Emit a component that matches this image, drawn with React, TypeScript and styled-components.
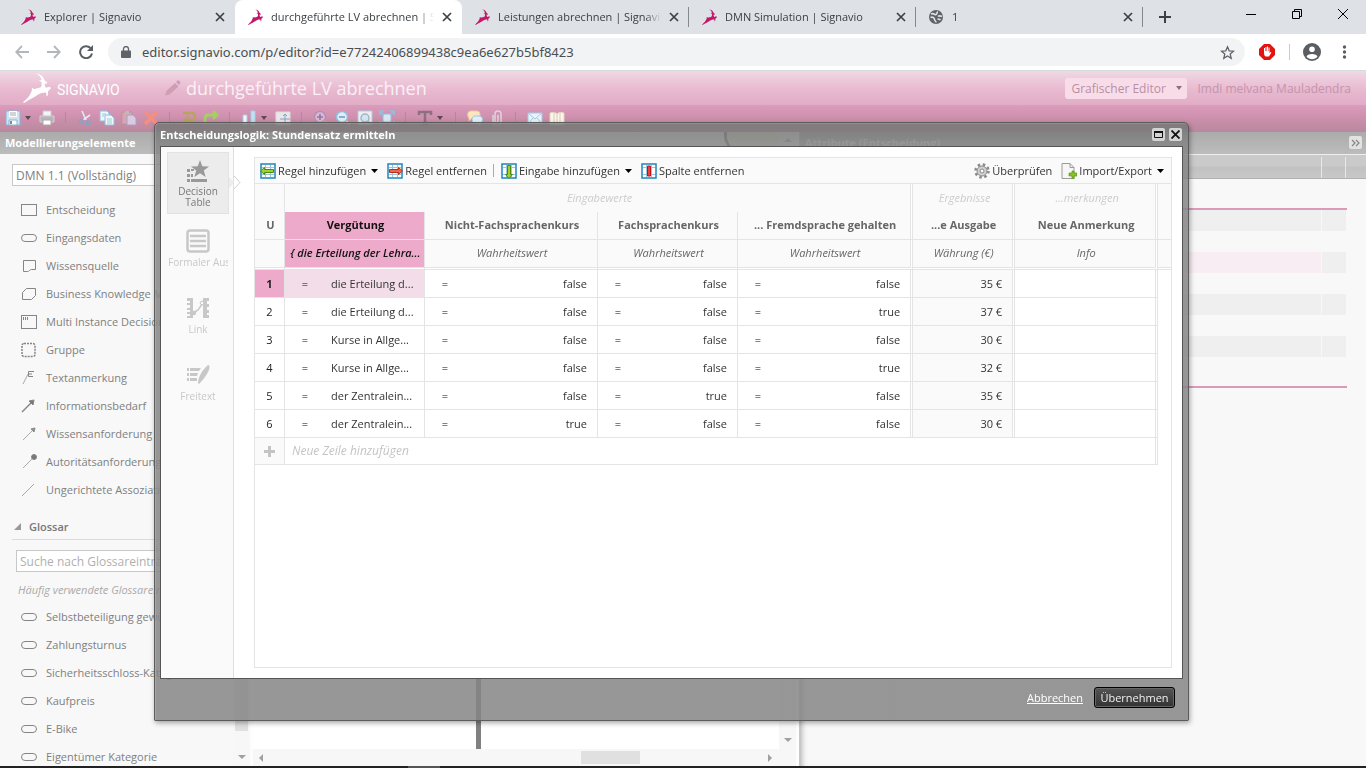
import React from "react";
import styled, { createGlobalStyle, css } from "styled-components";

const LINE = "#e4e4e4";
const PINK = "#eeaacb";

const GlobalStyle = createGlobalStyle`
  * { box-sizing: border-box; }
  body { margin: 0; font-family: "Open Sans", "Noto Sans", sans-serif; font-size: 11px; color: #333; }
  button, input, select { font: inherit; color: inherit; margin: 0; padding: 0; border: 0; background: none; }
  svg { display: block; flex: none; }
`;

const Page = styled.div`
  display: flex;
  flex-direction: column;
  height: 100vh;
  overflow: hidden;
  background: #f8f8f8;
`;

/* ---------- browser chrome ---------- */
const TabStrip = styled.div`
  display: flex;
  flex: none;
  height: 34px;
  padding-left: 8px;
  background: #dee1e6;
`;
const Tab = styled.div<{ $active?: boolean; $divider?: boolean }>`
  position: relative;
  display: flex;
  align-items: center;
  gap: 8px;
  flex: 0 1 227px;
  min-width: 0;
  height: 34px;
  padding: 0 10px 0 13px;
  border-radius: 8px 8px 0 0;
  background: ${(p) => (p.$active ? "#fff" : "transparent")};
  color: #3c4043;
  font-size: 11px;
  ${(p) =>
    p.$divider &&
    css`
      &::after {
        content: "";
        position: absolute;
        right: 0;
        top: 7px;
        height: 20px;
        border-right: 1px solid #85888c;
      }
    `}
`;
const TabTitle = styled.span`
  flex: 1;
  min-width: 0;
  padding-bottom: 2px;
  overflow: hidden;
  white-space: nowrap;
  mask-image: linear-gradient(90deg, #000 calc(100% - 16px), transparent);
`;
const PlainButton = styled.button`
  display: flex;
  align-items: center;
  justify-content: center;
  flex: none;
`;
const NewTab = styled(PlainButton)`
  width: 44px;
`;
const WindowButtons = styled.div`
  display: flex;
  margin-left: auto;
  padding-bottom: 6px;
`;
const WindowButton = styled(PlainButton)`
  width: 46px;
`;
const AddressRow = styled.div`
  display: flex;
  align-items: center;
  flex: none;
  height: 37px;
  padding: 0 11px 0 6px;
  border-bottom: 1px solid #d5dcdd;
  background: #fff;
`;
const NavButton = styled(PlainButton)`
  width: 32px;
  height: 28px;
`;
const Omnibox = styled.div`
  display: flex;
  align-items: center;
  flex: 1;
  height: 28px;
  margin-left: 6px;
  padding: 0 10px 0 13px;
  gap: 11px;
  border-radius: 14px;
  background: #f1f3f4;
  font-family: "Noto Sans", sans-serif;
  font-size: 13px;
`;
const Url = styled.input`
  flex: 1;
  min-width: 0;
  color: #4a4e52;
  outline: 0;
`;
const ExtSeparator = styled.span`
  width: 1px;
  height: 16px;
  background: #c8cbcf;
`;
const Extension = styled(PlainButton)`
  width: 44px;
`;

/* ---------- editor header ---------- */
const Header = styled.header`
  display: flex;
  align-items: center;
  flex: none;
  height: 34px;
  padding: 0 15px 0 23px;
  background: linear-gradient(#f0d9e4, #e8b9d0 55%, #e1adc6);
`;
const Brand = styled.span`
  width: 113px;
  padding: 3px 0 0 6px;
  color: #fff;
  font: 400 14px/20px Roboto, sans-serif;
`;
const DocTitle = styled.h1`
  margin: 0 auto 0 4px;
  color: #fbf0f5;
  font-size: 18px;
  font-weight: 400;
  line-height: 24px;
`;
const ModeButton = styled.button`
  display: flex;
  align-items: center;
  justify-content: space-between;
  width: 122px;
  height: 21px;
  margin-right: 10px;
  padding: 0 5px 0 6px;
  border-radius: 3px;
  background: #f8dde9;
  color: #b98ea4;
  font-size: 12px;
`;
const UserLink = styled.a`
  color: #c394ab;
  font-size: 12px;
  text-decoration: none;
`;
const ToolBar = styled.div`
  display: flex;
  align-items: center;
  flex: none;
  height: 27px;
  padding: 0 0 2px 2px;
  background: linear-gradient(#dc9cbc, #cc8fac 50%, #b8899e);
`;
const ToolButton = styled(PlainButton)`
  width: 22px;
  height: 22px;
`;
const CaretButton = styled(PlainButton)`
  width: 12px;
  height: 22px;
  padding-right: 4px;
`;
const ToolSeparator = styled.span`
  width: 1px;
  height: 11px;
  margin: 0 8px 0 7px;
  background: #b7869d;
`;

/* ---------- work area ---------- */
const WorkArea = styled.main`
  display: flex;
  flex: 1;
  min-height: 0;
`;
const PanelTitle = styled.h2`
  display: flex;
  align-items: center;
  justify-content: space-between;
  flex: none;
  height: 22px;
  margin: 0;
  padding: 0 5px 1px;
  background: linear-gradient(#ababab, #bcbcbc);
  color: #fff;
  font-size: 11px;
  font-weight: 700;
`;
const Sidebar = styled.aside`
  display: flex;
  flex-direction: column;
  flex: none;
  width: 250px;
  overflow: hidden;
  background: #f8f8f8;
  color: #808080;
`;
const SidebarBody = styled.div`
  display: flex;
  flex: 1;
  min-height: 0;
`;
const SidebarContent = styled.div`
  flex: 1;
  min-width: 0;
  overflow: hidden;
  padding: 10px 6px 0 12px;
`;
const StencilSelect = styled.select`
  display: block;
  appearance: none;
  width: 100%;
  height: 22px;
  margin-bottom: 10px;
  padding: 0 3px;
  border: 1px solid #c8c8c8;
  background: #fff;
  font-size: 12px;
`;
const ShapeList = styled.ul`
  margin: 0;
  padding: 0 0 0 8px;
  list-style: none;
`;
const ShapeItem = styled.li`
  display: flex;
  align-items: center;
  gap: 8px;
  height: 28px;
  white-space: nowrap;
`;
const ShapeLabel = styled.span`
  padding-bottom: 2px;
`;
const SectionTitle = styled.h3`
  display: flex;
  align-items: center;
  gap: 8px;
  height: 36px;
  margin: 0 0 10px;
  padding: 10px 0 0 2px;
  border-bottom: 1px solid #dcdcdc;
  color: #777;
  font-size: 11px;
  font-weight: 600;
`;
const SearchBox = styled.input`
  display: block;
  width: 100%;
  height: 22px;
  margin-left: 4px;
  padding: 0 3px;
  border: 1px solid #c8c8c8;
  background: #fff;
  font-size: 12px;
  &::placeholder { color: #b0b0b0; opacity: 1; }
`;
const Hint = styled.p`
  margin: 0;
  padding: 10px 0 5px 6px;
  color: #aaa;
  font-style: italic;
  line-height: 16px;
  white-space: nowrap;
`;
const ScrollTrack = styled.div<{ $row?: boolean }>`
  display: flex;
  flex-direction: ${(p) => (p.$row ? "row" : "column")};
  align-items: center;
  justify-content: space-between;
  flex: none;
  ${(p) => (p.$row ? "height: 17px; padding: 0 22px 0 4px;" : "width: 17px; padding: 4px 0 5px;")}
  background: #f7f7f7;
`;
const SideThumb = styled.span`
  width: 13px;
  flex: 1;
  margin-bottom: 22px;
  background: #e0e0e0;
`;
const CanvasThumb = styled.span`
  width: 59px;
  height: 13px;
  margin: 0 126px 0 auto;
  background: #e0e0e0;
`;
const Canvas = styled.section`
  display: flex;
  flex-direction: column;
  flex: none;
  width: 549px;
  padding: 0 3px;
  background: #fdfdfd;
`;
const CanvasView = styled.div`
  display: flex;
  flex: 1;
  min-height: 0;
`;
const Drawing = styled.div`
  display: flex;
  flex: 1;
  justify-content: space-between;
  min-width: 0;
  padding-left: 223px;
  background: #fff;
`;
const Connector = styled.span`
  width: 5px;
  margin-top: 60px;
  background: #808080;
`;
const ShapeCorner = styled.span`
  width: 55px;
  height: 20px;
  border: solid #707070;
  border-width: 0 0 2px 3px;
  border-radius: 0 0 0 16px;
  background: #f0f0dc;
`;
const Attributes = styled.aside`
  flex: 1;
  min-width: 0;
  border-left: 1px solid #c8c8c8;
  background: #f8f8f8;
  box-shadow: inset 6px 0 6px -5px rgba(0, 0, 0, 0.35);
`;
const CollapseButton = styled(PlainButton)`
  width: 13px;
  height: 13px;
  margin-right: -1px;
  border-radius: 2px;
  background: #e2e2e2;
`;
const AttributeHead = styled.div`
  display: grid;
  grid-template-columns: 1fr 24px 20px;
  height: 25px;
  padding-top: 2px;
  border-top: 1px solid #eee;
  border-bottom: 1px solid #b0b0b0;
  background: linear-gradient(#cacaca 45%, #c2c2c2 55%, #c8c8c8);
`;
const AttributeHeadCell = styled.span`
  border-right: 1px solid #e8e8e8;
  &:last-child { border-right: 0; }
`;
const AttributeRows = styled.div`
  margin: 29px 19px 0 10px;
  padding-bottom: 8px;
  border: solid #db9ab9;
  border-width: 2px 0;
`;
const AttributeRow = styled.div<{ $tone: string }>`
  display: grid;
  grid-template-columns: 1fr 24px;
  gap: 1px;
  height: 21px;
  margin-right: 1px;
  & > span:first-child { background: ${(p) => (p.$tone === "pink" ? "#f8edf3" : p.$tone === "gray" ? "#efefef" : "transparent")}; }
  & > span:last-child { background: ${(p) => (p.$tone === "none" ? "transparent" : "#efefef")}; }
`;
const Taskbar = styled.div`
  flex: none;
  height: 2px;
  background: linear-gradient(90deg, #222 408px, #555 408px, #555 440px, #222 440px);
`;

/* ---------- dialog ---------- */
const Overlay = styled.div`
  position: fixed;
  inset: 0;
  display: flex;
  padding: 122px 177px 47px 154px;
`;
const Dialog = styled.section`
  display: flex;
  flex-direction: column;
  flex: 1;
  min-width: 0;
  padding: 0 5px;
  border: 1px solid #5c5c5c;
  border-radius: 5px 5px 1px 1px;
  background: linear-gradient(rgba(118, 118, 118, 0.86), rgba(133, 133, 133, 0.85) 24px);
  box-shadow: inset 1px 1px 0 rgba(255, 255, 255, 0.15), 1px 2px 5px rgba(0, 0, 0, 0.35);
`;
const DialogHeader = styled.div`
  display: flex;
  align-items: center;
  flex: none;
  gap: 4px;
  height: 23px;
`;
const DialogTitle = styled.h2`
  margin: 0 auto 0 0;
  color: #fff;
  font-size: 11px;
  font-weight: 700;
`;
const WindowTool = styled(PlainButton)`
  width: 13px;
  height: 13px;
  border-radius: 2px;
  background: #d4d4d4;
  &:last-child { margin-right: 1px; }
`;
const DialogBody = styled.div`
  display: flex;
  flex: 1;
  min-height: 0;
  border: 1px solid #555;
  background: #fff;
`;
const ViewNav = styled.nav`
  display: flex;
  flex-direction: column;
  gap: 5px;
  flex: none;
  width: 73px;
  padding: 5px 4px 0 6px;
  border-right: 1px solid #dedede;
  background: #fafafa;
`;
const ViewItem = styled.button<{ $active?: boolean }>`
  position: relative;
  display: flex;
  flex-direction: column;
  align-items: center;
  gap: ${(p) => (p.$active ? "2px" : "4px")};
  height: 62px;
  padding-top: ${(p) => (p.$active ? "7px" : "9px")};
  border: 1px solid ${(p) => (p.$active ? "#e2e2e2" : "transparent")};
  background: ${(p) => (p.$active ? "#ececec" : "transparent")};
  color: ${(p) => (p.$active ? "#777" : "#c8c8c8")};
  font-size: 10px;
  line-height: 11px;
`;
const ViewLabel = styled.span`
  width: 100%;
  text-align: center;
  white-space: pre-line;
`;
const ClippedLabel = styled(ViewLabel)`
  overflow: hidden;
  text-align: left;
  white-space: nowrap;
`;
const ViewPointer = styled.svg`
  position: absolute;
  left: 61px;
  top: 22px;
`;
const Panel = styled.div`
  display: flex;
  flex-direction: column;
  flex: 1;
  min-width: 0;
  margin: 10px 10px 10px 20px;
  border: 1px solid ${LINE};
`;
const RuleBar = styled.div`
  display: flex;
  align-items: center;
  flex: none;
  height: 26px;
  padding: 0 7px 0 5px;
  border-bottom: 1px solid ${LINE};
  background: #fafafa;
  font-size: 11px;
`;
const RuleButton = styled.button<{ $gap?: number }>`
  display: flex;
  align-items: center;
  gap: 2px;
  margin-right: ${(p) => p.$gap ?? 9}px;
  color: #333;
  white-space: nowrap;
`;
const RuleCaret = styled.span`
  padding-left: 3px;
`;
const RuleSeparator = styled.span`
  width: 1px;
  height: 13px;
  margin: 0 7px 0 1px;
  background: #aaa;
`;
const RuleSpacer = styled.span`
  flex: 1;
`;

const RuleTable = styled.table`
  width: 100%;
  table-layout: fixed;
  border-collapse: separate;
  border-spacing: 0;
  font-size: 11px;
  line-height: 16px;
`;
type CellProps = {
  $edge?: "single" | "double" | "none";
  $bottom?: "single" | "double" | "none";
  $tone?: "pink" | "blush" | "shade" | "plain";
};
const edges = { single: `1px solid ${LINE}`, double: `3px double ${LINE}`, none: "0" };
const tones = { pink: PINK, blush: "#f3dde8", shade: "#fafafa", plain: "transparent" };
const cell = css<CellProps>`
  overflow: hidden;
  padding: 0 4px;
  border-right: ${(p) => edges[p.$edge ?? "single"]};
  border-bottom: ${(p) => edges[p.$bottom ?? "single"]};
  background: ${(p) => tones[p.$tone ?? "plain"]};
  background-clip: padding-box;
  white-space: nowrap;
`;
const HeadCell = styled.th<CellProps & { $kind: "group" | "name" | "type" }>`
  ${cell}
  height: ${(p) => (p.$kind === "type" ? 30 : 28)}px;
  padding: ${(p) => (p.$kind === "group" ? "0 2px 0 6px" : "0 2px 2px 4px")};
  text-align: center;
  color: ${(p) => (p.$kind === "group" ? "#ccc" : p.$tone === "pink" ? "#111" : "#666")};
  font-style: ${(p) => (p.$kind === "name" ? "normal" : "italic")};
  font-weight: ${(p) => (p.$kind === "name" ? 700 : p.$kind === "type" && p.$tone === "pink" ? 600 : 400)};
`;
const RowNumber = styled.th<CellProps>`
  ${cell}
  height: 28px;
  font-weight: ${(p) => (p.$tone === "pink" ? 700 : 400)};
  color: #222;
`;
const OperatorCell = styled.td<CellProps>`
  ${cell}
  text-align: center;
  color: #000;
`;
const ValueCell = styled.td<CellProps & { $align?: string }>`
  ${cell}
  padding: 0 10px 0 6px;
  text-align: ${(p) => p.$align ?? "right"};
  color: #333;
`;
const AddCell = styled.td<CellProps>`
  ${cell}
  height: 27px;
  padding: 0 7px;
  color: #c4c4c4;
  font-size: 12px;
  font-style: italic;
`;
const AddButton = styled(PlainButton)`
  width: 15px;
`;
const DialogFooter = styled.div`
  display: flex;
  align-items: center;
  justify-content: flex-end;
  flex: none;
  gap: 11px;
  height: 41px;
  padding: 0 8px 5px 0;
`;
const CancelLink = styled.a`
  color: #fff;
  text-decoration: underline;
`;
const ApplyButton = styled.button`
  width: 81px;
  height: 21px;
  border: 1px solid #000;
  border-radius: 3px;
  background: linear-gradient(#555, #333);
  box-shadow: inset 0 0 0 1px #666;
  color: #f0f0f0;
`;

/* ---------- drawings ---------- */
const Deer = ({ w, h, color }: { w: number; h: number; color: string }) => (
  <svg width={w} height={h} viewBox="0 0 28 30" fill={color} aria-hidden="true">
    <path d="M13 0c4.500 1.200 8 4 8.500 7.200l2.700 2.300-.5 1.200-2.200-.2c.2 1.600.5 3 1.300 4.300l4-1 1.200 1.500-3 3.200c.3 1.500 0 3-.7 4.500l-1 .2c.3-1.600.2-2.700-.5-3.700c-3 .2-5.600.6-8 2.300C11 24.500 6.500 26.500 1 30l-1-.7C4.500 25.500 7 22.500 8.500 18.500c.3-1 .6-1.700.2-2.800l.8-.9.900 1.300c2.600-.6 5.600-.9 7.600-2.100c.8-1.500.9-3.300.5-5L15.500 7.500c1.200 0 2.300-.1 3-.6C18 4.200 16 2 13 0z" />
  </svg>
);
const Close = () => (
  <svg width="10" height="10" viewBox="0 0 10 10" stroke="#3c4043" strokeWidth="1.700"><path d="M1 1l8 8M9 1l-8 8" /></svg>
);
const Caret = ({ color = "#5d4751", w = 7 }: { color?: string; w?: number }) => (
  <svg width={w} height="4" viewBox="0 0 8 4" preserveAspectRatio="none" fill={color}><path d="M0 0h8L4 4z" /></svg>
);
const Arrow = ({ dir }: { dir: "up" | "down" | "left" | "right" }) => {
  const d = { up: "M0 6L4 2l4 4z", down: "M0 2h8L4 6z", left: "M6 0v8L2 4z", right: "M2 0v8l4-4z" }[dir];
  return <svg width="8" height="8" viewBox="0 0 8 8" fill="#a0a0a0"><path d={d} /></svg>;
};
const Icon = ({ children, size = 16, stroke }: { children: React.ReactNode; size?: number; stroke?: string }) => (
  <svg width={size} height={size} viewBox="0 0 16 16" fill="none" stroke={stroke}>{children}</svg>
);

const toolIcons: Record<string, React.ReactNode> = {
  save: <><path d="M1 1h14v14H1z" fill="#cfe3f0" stroke="#86b4d2" /><path d="M4 1h8v6H4z" fill="#fff" /><path d="M5 3h6M5 5h6" stroke="#a6a6b0" /><path d="M4 10h8v5H4z" fill="#fff" stroke="#86b4d2" /><path d="M6 11v3" stroke="#889" strokeWidth="2" /></>,
  print: <><path d="M4 1h8v5H4z" fill="#f5f5f5" stroke="#ccc" /><path d="M1 6h14v6H1z" fill="#b9b4bb" stroke="#d5d0d6" /><path d="M4 10h8v5H4z" fill="#fff" stroke="#aaa" /></>,
  cut: <><path d="M5 1l4 9M13 5L6 10" stroke="#e3eaf2" strokeWidth="1.600" /><circle cx="4.500" cy="11.500" r="2" stroke="#7fa6cb" strokeWidth="1.500" /><circle cx="11" cy="13" r="2" stroke="#7fa6cb" strokeWidth="1.500" /></>,
  copy: <><path d="M1 1h7l2 2v8H1z" fill="#f1f7fb" stroke="#8fbfe0" /><path d="M6 5h6l3 3v7H6z" fill="#f1f7fb" stroke="#8fbfe0" /><path d="M8 9h5M8 11h5M8 13h5M3 4h4M3 6h2" stroke="#9cc" /></>,
  paste: <><path d="M1 2h10v12H1z" fill="#d5a7b0" stroke="#c0929a" /><path d="M4 1h4v3H4z" fill="#bbb" /><path d="M6 5h6l3 3v7H6z" fill="#dccbe0" stroke="#a9a0cf" /></>,
  remove: <path d="M2 2l12 12M14 2L2 14" stroke="#f58f7c" strokeWidth="3.500" />,
  undo: <path d="M2 3h9c4 0 4 7 0 7H4M8 6l-4 4 4 4" stroke="#b8a35f" strokeWidth="2.500" />,
  redo: <path d="M2 14V9c0-3 2-4 4-4h7M10 1l4 4-4 4" stroke="#a4d060" strokeWidth="2.800" />,
  align: <><path d="M2 5h4v10H2z" fill="#f1f7fb" stroke="#a8cfe8" /><path d="M10 1h4v14h-4z" fill="#c3dff0" stroke="#a8cfe8" /></>,
  move: <><path d="M1 2h14v13H1z" fill="#ece6ea" stroke="#ddd" /><path d="M10 4v10M5 9h10M8 6l2-2 2 2M8 12l2 2 2-2" stroke="#7fa6c5" /></>,
  zoomIn: <><circle cx="7" cy="7" r="5.500" fill="#dcb9d2" stroke="#b58fb5" strokeWidth="1.500" /><path d="M4 7h6M7 4v6" stroke="#8f74a5" strokeWidth="1.500" /><path d="M11 11l4 4" stroke="#d0a888" strokeWidth="2.500" /></>,
  zoomOut: <><circle cx="7" cy="7" r="5.500" fill="#dfeef7" stroke="#8fbfdf" strokeWidth="1.500" /><path d="M4 7h6" stroke="#6f9ab8" strokeWidth="1.500" /><path d="M11 11l4 4" stroke="#e8c29a" strokeWidth="2.500" /></>,
  fit: <><path d="M1 1h14v14H1z" fill="#f0ecf0" stroke="#a8cfe0" /><circle cx="8" cy="8" r="4" fill="#d5e5f0" stroke="#9bb8cd" strokeWidth="1.500" /><path d="M11 11l3 3" stroke="#d8b492" strokeWidth="2" /></>,
  expand: <><path d="M4 4h8v8H4z" fill="#d7e8f3" stroke="#8fc1e0" /><path d="M1 5V1h4M1 1l4 4M11 1h4v4M15 1l-4 4M1 11v4h4M1 15l4-4M15 11v4h-4M15 15l-4-4" stroke="#8fc1e0" strokeWidth="1.500" /></>,
  text: <path d="M2 5V2h12v3M8 2v12M5 14h6" stroke="#8f7081" strokeWidth="2.500" />,
  chat: <><path d="M4 1h6a3 3 0 013 3v1a3 3 0 01-3 3H5l-3 3V8C0 6 0 1 4 1z" fill="#fae7bd" stroke="#eacb94" /><path d="M8 6h4c5 0 4 7 1 7v3l-3-3H8C4 13 4 6 8 6z" fill="#e2eff8" stroke="#9cc6e4" /></>,
  clip: <path d="M4 5v7a4 4 0 008 0V4a3 3 0 00-6 0v7a1.500 1.500 0 003 0V5" stroke="#e1d3db" strokeWidth="1.500" />,
  mail: <><path d="M1 3h14v11H1z" fill="#e9f3fa" stroke="#a0cbe6" /><path d="M1 3l7 6 7-6M1 14l5-6M15 14l-5-6" stroke="#a0cbe6" /></>,
  book: <><path d="M1 3c3-1 5-1 7 1 2-2 4-2 7-1v12H1z" fill="#fdf6ea" stroke="#e3d4c2" /><path d="M8 4v10M5 3v11M11 3v11" stroke="#d9c8b6" /></>,
};
const toolGroups: string[][] = [
  ["save", "^", "print"],
  ["cut", "copy", "paste", "remove"],
  ["undo", "redo"],
  ["align", "^", "move"],
  ["zoomIn", "zoomOut", "fit", "expand"],
  ["text", "^"],
  ["chat", "clip"],
  ["mail", "book"],
];

const shapeIcons: Record<string, React.ReactNode> = {
  rect: <rect x="1.500" y="2.500" width="15" height="11" />,
  pill: <rect x="1.500" y="4.500" width="15" height="7" rx="3.500" />,
  doc: <path d="M3.500 2.500h12v9h-4c-2 0-2 2-4 2h-4z" />,
  cut: <path d="M6.500 2.500h9v7l-4 4h-9v-7z" />,
  multi: <><rect x="1.500" y="1.500" width="15" height="13" /><path d="M3.500 3v3M5.500 3v3M7.500 3v3" /></>,
  group: <rect x="2" y="1.500" width="13" height="13" rx="2" strokeDasharray="2 1" strokeWidth="1.500" />,
  note: <><path d="M3 14L8 4" stroke="#aaa" /><path d="M14 1.500H8.500v5H13M8 4h4" /></>,
  arrowBold: <><path d="M2 14L12 4" strokeWidth="1.500" /><path d="M14 2l-5 1 4 4z" fill="#777" /></>,
  arrow: <><path d="M3 14L13 4" stroke="#aaa" /><path d="M15 2l-4 1 3 3z" fill="#999" /></>,
  dot: <><path d="M3 14L13 4" stroke="#aaa" /><circle cx="14" cy="3" r="2.500" fill="#777" /></>,
  line: <path d="M2 14L14 2" stroke="#aaa" />,
};
const ShapeIcon = ({ name }: { name: string }) => (
  <svg width="18" height="16" viewBox="0 0 18 16" fill="none" stroke="#858585">{shapeIcons[name]}</svg>
);

const shapes: [string, string][] = [
  ["rect", "Entscheidung"],
  ["pill", "Eingangsdaten"],
  ["doc", "Wissensquelle"],
  ["cut", "Business Knowledge Model"],
  ["multi", "Multi Instance Decision"],
  ["group", "Gruppe"],
  ["note", "Textanmerkung"],
  ["arrowBold", "Informationsbedarf"],
  ["arrow", "Wissensanforderung"],
  ["dot", "Autoritätsanforderung"],
  ["line", "Ungerichtete Assoziation"],
];
const glossary = ["Selbstbeteiligung gewünscht", "Zahlungsturnus", "Sicherheitsschloss-Kategorie", "Kaufpreis", "E-Bike", "Eigentümer Kategorie"];

const GridBase = () => (
  <><path d="M1 1h14v14H1z" fill="#fff" stroke="#1c86bf" strokeWidth="1.500" /><path d="M2 4.500h12M2 11.500h12M5.500 2v12M10.500 2v12" stroke="#9cc4dc" /></>
);
const AddRuleIcon = () => <Icon><GridBase /><path d="M.5 8l4-3.500V6.500h9v3h-9v2z" fill="#9fd22a" stroke="#4d8a10" /></Icon>;
const RemoveRuleIcon = () => <Icon><GridBase /><path d="M15.500 8l-4-3.500V6.500h-9v3h9v2z" fill="#f0644c" stroke="#b92c1c" /></Icon>;
const AddInputIcon = () => <Icon><GridBase /><path d="M8 15.500l3.500-4h-2v-9h-3v9h-2z" fill="#9fd22a" stroke="#4d8a10" /></Icon>;
const RemoveColumnIcon = () => <Icon><GridBase /><path d="M6.500 3h3v10h-3z" fill="#f0403a" stroke="#b9141c" /></Icon>;
const GearIcon = () => (
  <Icon>
    <circle cx="8" cy="8" r="6.500" stroke="#8a8a8a" strokeWidth="2.500" strokeDasharray="2.500 2.600" />
    <circle cx="8" cy="8" r="5" fill="#d0d0d0" stroke="#8a8a8a" /><circle cx="8" cy="8" r="2" fill="#fafafa" stroke="#8a8a8a" />
  </Icon>
);
const ExportIcon = () => (
  <Icon><path d="M1 .5h8l4 4v11H1z" fill="#f6f6f6" stroke="#9a9a9a" /><path d="M9 .5v4h4" stroke="#9a9a9a" /><path d="M11 8h2v2h3v3h-3v3h-2v-3H8v-3h3z" fill="#86c61c" stroke="#4d8a10" strokeWidth=".6" /></Icon>
);

const DecisionTableIcon = () => (
  <svg width="24" height="24" viewBox="0 0 24 24" fill="#999"><path d="M14 0l2.300 6.300 6.700.2-5.200 4.100 1.800 6.400L14 13.300 8.400 17l1.800-6.400L5 6.500l6.700-.2z" /><path d="M1 9h3v3H1zM1 14h3v3H1zM5 9h3v2H5zM5 14h2v3H5zM1 19h3v3H1zM5 19h16v3H5z" /></svg>
);
const ExpressionIcon = () => (
  <svg width="24" height="24" viewBox="0 0 24 24" fill="none" stroke="#c8c8c8"><rect x="1.500" y="1.500" width="21" height="21" rx="2.500" strokeWidth="2.500" /><path d="M4 7h16M4 12h16M4 17h16" strokeWidth="2.600" /></svg>
);
const LinkIcon = () => (
  <svg width="24" height="24" viewBox="0 0 24 24" fill="#c8c8c8" stroke="#c8c8c8"><path d="M1 2h6v20H1v-2h3v-2H1v-2h3v-2H1v-2h3V9H1V7h3V5H1zM17 2h6v3h-2v3h2v3h-2v3h2v3h-2v2h2v3h-6z" stroke="none" /><path d="M7 17l5-3 5-7" fill="none" strokeWidth="1.500" /><circle cx="8" cy="17" r="1.800" /><circle cx="16" cy="7" r="1.800" fill="#fafafa" /></svg>
);
const FreeTextIcon = () => (
  <svg width="24" height="24" viewBox="0 0 24 24" fill="#c8c8c8"><path d="M1 5h2v3H1zM4 5h11l-2 3H4zM1 10h2v3H1zM4 10h8l-1 3H4zM1 15h2v3H1zM4 15h7v3H4zM22 2c2 0 2 3 0 7-2 4-5 8-9 12l-1-1c0-6 5-14 10-18z" /></svg>
);

const rules = [
  ["die Erteilung d...", "false", "false", "false", "35 €"],
  ["die Erteilung d...", "false", "false", "true", "37 €"],
  ["Kurse in Allge...", "false", "false", "false", "30 €"],
  ["Kurse in Allge...", "false", "false", "true", "32 €"],
  ["der Zentralein...", "false", "true", "false", "35 €"],
  ["der Zentralein...", "true", "false", "false", "30 €"],
];
const inputs: { name: string; type: string; last?: boolean; pink?: boolean }[] = [
  { name: "Vergütung", type: "{ die Erteilung der Lehra...", pink: true },
  { name: "Nicht-Fachsprachenkurs", type: "Wahrheitswert" },
  { name: "Fachsprachenkurs", type: "Wahrheitswert" },
  { name: "... Fremdsprache gehalten", type: "Wahrheitswert", last: true },
];
const columnWidths = [30, 40, 100, 40, 133, 40, 100, 40, 135, 102, 143];
const attributeTones = ["gray", "none", "pink", "none", "gray", "none", "gray", "none"];

function BrowserChrome() {
  const tabs = ["Explorer | Signavio", "durchgeführte LV abrechnen | Signavio", "Leistungen abrechnen | Signavio", "DMN Simulation | Signavio"];
  return (
    <>
      <TabStrip>
        {tabs.map((t, i) => (
          <Tab key={t} $active={i === 1} $divider={i > 1}>
            <Deer w={15} h={16} color="#c2186b" />
            <TabTitle>{t}</TabTitle>
            <PlainButton aria-label="Tab schließen"><Close /></PlainButton>
          </Tab>
        ))}
        <Tab $divider>
          <svg width="15" height="14" viewBox="0 0 15 14"><circle cx="7" cy="7" r="7" fill="#5f6368" /><path d="M2 4c2-1 3 0 4 .5S9 3 8 1.500M1.500 7.500c2-1 4 .5 4 2s1.500 1 1.500 3M9 6.500c1-1 3-.5 4 0M8.500 9c1 0 2 0 3 1" stroke="#dee1e6" strokeWidth="1.600" fill="none" /></svg>
          <TabTitle>1</TabTitle>
          <PlainButton aria-label="Tab schließen"><Close /></PlainButton>
        </Tab>
        <NewTab aria-label="Neuer Tab"><svg width="12" height="12" viewBox="0 0 12 12" stroke="#3c4043" strokeWidth="2"><path d="M6 0v12M0 6h12" /></svg></NewTab>
        <WindowButtons>
          <WindowButton aria-label="Minimieren"><svg width="10" height="10" viewBox="0 0 10 10" stroke="#000"><path d="M0 5.500h10" /></svg></WindowButton>
          <WindowButton aria-label="Verkleinern"><svg width="10" height="10" viewBox="0 0 10 10" stroke="#000" fill="none"><path d="M.5 2.500h7v7h-7zM2.500 2V.5h7v7H8" /></svg></WindowButton>
          <WindowButton aria-label="Schließen"><svg width="10" height="10" viewBox="0 0 10 10" stroke="#000"><path d="M0 0l10 10M10 0L0 10" /></svg></WindowButton>
        </WindowButtons>
      </TabStrip>
      <AddressRow>
        <NavButton aria-label="Zurück"><svg width="14" height="14" viewBox="0 0 14 14" stroke="#b4b7ba" strokeWidth="1.800" fill="none"><path d="M14 7H1.500M7 1L1.200 7 7 13" /></svg></NavButton>
        <NavButton aria-label="Vor"><svg width="14" height="14" viewBox="0 0 14 14" stroke="#b4b7ba" strokeWidth="1.800" fill="none"><path d="M0 7h12.500M7 1l5.800 6L7 13" /></svg></NavButton>
        <NavButton aria-label="Neu laden"><svg width="14" height="14" viewBox="0 0 14 14"><path d="M11.500 3A6 6 0 1013 8.500" stroke="#5a5d61" strokeWidth="2" fill="none" /><path d="M14 0v6H8z" fill="#5a5d61" /></svg></NavButton>
        <Omnibox>
          <svg width="10" height="12" viewBox="0 0 10 12"><path d="M1 4.500h8a1 1 0 011 1V11a1 1 0 01-1 1H1a1 1 0 01-1-1V5.500a1 1 0 011-1z" fill="#5f6368" /><path d="M2.500 5V3a2.500 2.500 0 015 0v2" stroke="#5f6368" strokeWidth="1.300" fill="none" /></svg>
          <Url aria-label="Adresse" defaultValue="editor.signavio.com/p/editor?id=e77242406899438c9ea6e627b5bf8423" />
          <PlainButton aria-label="Lesezeichen"><svg width="15" height="15" viewBox="0 0 15 15" fill="none" stroke="#5f6368" strokeWidth="1.300"><path d="M7.500 1.800l1.700 4 4.300.4-3.300 2.800 1 4.300-3.700-2.300-3.700 2.300 1-4.300L1.500 6.200l4.300-.4z" /></svg></PlainButton>
        </Omnibox>
        <Extension aria-label="Werbeblocker"><svg width="16" height="16" viewBox="0 0 16 16"><path d="M5 0h6l5 5v6l-5 5H5l-5-5V5z" fill="#e3130f" /><path d="M5 8V4h1v3h.5V3h1v4H8V2.500h1V7h.5V3.500h1V9l1.300-1 .6.500L10 12.500H7C5.500 12.500 5 10.500 5 8z" fill="#fff" /></svg></Extension>
        <ExtSeparator />
        <Extension aria-label="Profil"><svg width="18" height="18" viewBox="0 0 18 18"><circle cx="9" cy="9" r="9" fill="#5a5d61" /><circle cx="9" cy="6.300" r="2.800" fill="#fff" /><path d="M3.500 13.500C4 10 14 10 14.500 13.500 12 17 6 17 3.500 13.500z" fill="#fff" /></svg></Extension>
        <PlainButton aria-label="Menü"><svg width="21" height="16" viewBox="0 0 21 16" fill="#5a5d61"><circle cx="10.500" cy="3" r="1.700" /><circle cx="10.500" cy="8" r="1.700" /><circle cx="10.500" cy="13" r="1.700" /></svg></PlainButton>
      </AddressRow>
    </>
  );
}

function EditorHeader() {
  return (
    <>
      <Header>
        <Deer w={28} h={30} color="#fff" />
        <Brand>SIGNAVIO</Brand>
        <svg width="18" height="16" viewBox="0 0 18 16" fill="#cf9db5"><path d="M1 15.500l1.500-4.500 8.500-8 3.500 3.500-9 8zM12 2l1.500-1.500c1.200-.8 3.500 1.500 2.800 2.800L15 5z" /></svg>
        <DocTitle>durchgeführte LV abrechnen</DocTitle>
        <ModeButton aria-haspopup="menu">Grafischer Editor<Caret color="#8d6e7d" w={6} /></ModeButton>
        <UserLink href="#user">Imdi melvana Mauladendra</UserLink>
      </Header>
      <ToolBar>
        {toolGroups.map((group, g) => (
          <React.Fragment key={g}>
            {g > 0 && <ToolSeparator />}
            {group.map((name, i) =>
              name === "^" ? (
                <CaretButton key={i} aria-label="Weitere Optionen"><Caret w={6} /></CaretButton>
              ) : (
                <ToolButton key={i} aria-label={name}><Icon>{toolIcons[name]}</Icon></ToolButton>
              )
            )}
          </React.Fragment>
        ))}
      </ToolBar>
    </>
  );
}

function Workspace() {
  return (
    <WorkArea>
      <Sidebar>
        <PanelTitle>Modellierungselemente</PanelTitle>
        <SidebarBody>
          <SidebarContent>
            <StencilSelect aria-label="Notation" defaultValue="dmn"><option value="dmn">DMN 1.1 (Vollständig)</option></StencilSelect>
            <ShapeList>
              {shapes.map(([icon, label]) => <ShapeItem key={label}><ShapeIcon name={icon} /><ShapeLabel>{label}</ShapeLabel></ShapeItem>)}
            </ShapeList>
            <SectionTitle><svg width="7" height="7" viewBox="0 0 7 7" fill="#999"><path d="M7 0v7H0z" /></svg>Glossar</SectionTitle>
            <SearchBox aria-label="Glossar durchsuchen" placeholder="Suche nach Glossareinträgen" />
            <Hint>Häufig verwendete Glossareinträge</Hint>
            <ShapeList>
              {glossary.map((label) => <ShapeItem key={label}><ShapeIcon name="pill" /><ShapeLabel>{label}</ShapeLabel></ShapeItem>)}
            </ShapeList>
          </SidebarContent>
          <ScrollTrack><SideThumb /><Arrow dir="down" /></ScrollTrack>
        </SidebarBody>
      </Sidebar>
      <Canvas>
        <CanvasView>
          <Drawing><Connector /><ShapeCorner /></Drawing>
          <ScrollTrack><Arrow dir="up" /><Arrow dir="down" /></ScrollTrack>
        </CanvasView>
        <ScrollTrack $row><Arrow dir="left" /><CanvasThumb /><Arrow dir="right" /></ScrollTrack>
      </Canvas>
      <Attributes>
        <PanelTitle>
          Attribute (Entscheidung)
          <CollapseButton aria-label="Einklappen"><svg width="9" height="8" viewBox="0 0 9 8" fill="none" stroke="#888" strokeWidth="1.300"><path d="M1 1l3 3-3 3M5 1l3 3-3 3" /></svg></CollapseButton>
        </PanelTitle>
        <AttributeHead><AttributeHeadCell /><AttributeHeadCell /><AttributeHeadCell /></AttributeHead>
        <AttributeRows>
          {attributeTones.map((tone, i) => <AttributeRow key={i} $tone={tone}><span /><span /></AttributeRow>)}
        </AttributeRows>
      </Attributes>
    </WorkArea>
  );
}

function DecisionTable() {
  return (
    <RuleTable>
      <colgroup>
        {columnWidths.map((w, i) => <col key={i} width={w} />)}
        <col />
      </colgroup>
      <thead>
        <tr>
          <HeadCell $kind="group" $tone="shade" $bottom="none" />
          <HeadCell $kind="group" $tone="shade" $bottom="none" $edge="double" colSpan={8}>Eingabewerte</HeadCell>
          <HeadCell $kind="group" $tone="shade" $bottom="none" $edge="double">Ergebnisse</HeadCell>
          <HeadCell $kind="group" $tone="shade" $bottom="none" $edge="double">...merkungen</HeadCell>
          <HeadCell $kind="group" $tone="shade" $bottom="none" $edge="none" />
        </tr>
        <tr>
          <HeadCell $kind="name" $tone="shade">U</HeadCell>
          {inputs.map((c) => (
            <HeadCell key={c.name} $kind="name" colSpan={2} $tone={c.pink ? "pink" : "shade"} $edge={c.last ? "double" : "single"}>{c.name}</HeadCell>
          ))}
          <HeadCell $kind="name" $tone="shade" $edge="double">...e Ausgabe</HeadCell>
          <HeadCell $kind="name" $tone="shade" $edge="double">Neue Anmerkung</HeadCell>
          <HeadCell $kind="name" $tone="shade" $edge="none" />
        </tr>
        <tr>
          <HeadCell $kind="type" $tone="shade" $bottom="double" />
          {inputs.map((c) => (
            <HeadCell key={c.name} $kind="type" $bottom="double" colSpan={2} $tone={c.pink ? "pink" : "shade"} $edge={c.last ? "double" : "single"}>{c.type}</HeadCell>
          ))}
          <HeadCell $kind="type" $tone="shade" $bottom="double" $edge="double">Währung (€)</HeadCell>
          <HeadCell $kind="type" $tone="shade" $bottom="double" $edge="double">Info</HeadCell>
          <HeadCell $kind="type" $tone="shade" $bottom="double" $edge="none" />
        </tr>
      </thead>
      <tbody>
        {rules.map((rule, r) => (
          <tr key={r}>
            <RowNumber scope="row" $tone={r === 0 ? "pink" : "plain"}>{r + 1}</RowNumber>
            {inputs.map((c, i) => {
              const tone = r === 0 && i === 0 ? "blush" : "plain";
              return (
                <React.Fragment key={c.name}>
                  <OperatorCell $edge="none" $tone={tone}>=</OperatorCell>
                  <ValueCell $tone={tone} $align={i === 0 ? "left" : "right"} $edge={c.last ? "double" : "single"}>{rule[i]}</ValueCell>
                </React.Fragment>
              );
            })}
            <ValueCell $tone="shade" $edge="double">{rule[4]}</ValueCell>
            <ValueCell $edge="double" />
            <ValueCell $edge="none" $bottom="none" />
          </tr>
        ))}
        <tr>
          <AddCell $tone="shade"><AddButton aria-label="Zeile hinzufügen"><svg width="11" height="11" viewBox="0 0 11 11" stroke="#c4c4c4" strokeWidth="3"><path d="M5.500 0v11M0 5.500h11" /></svg></AddButton></AddCell>
          <AddCell colSpan={10} $edge="double">Neue Zeile hinzufügen</AddCell>
          <AddCell $edge="none" $bottom="none" />
        </tr>
      </tbody>
    </RuleTable>
  );
}

export default function App() {
  return (
    <>
      <GlobalStyle />
      <Page>
        <BrowserChrome />
        <EditorHeader />
        <Workspace />
        <Taskbar />
      </Page>
      <Overlay>
        <Dialog role="dialog" aria-labelledby="dialog-title">
          <DialogHeader>
            <DialogTitle id="dialog-title">Entscheidungslogik: Stundensatz ermitteln</DialogTitle>
            <WindowTool aria-label="Maximieren"><svg width="9" height="7" viewBox="0 0 9 7"><path d="M.5 1h8v5.500h-8z" fill="none" stroke="#111" /><path d="M0 0h9v2H0z" fill="#111" /></svg></WindowTool>
            <WindowTool aria-label="Schließen"><svg width="9" height="9" viewBox="0 0 9 9" stroke="#111" strokeWidth="1.800"><path d="M.5 .5l8 8M8.500 .5l-8 8" /></svg></WindowTool>
          </DialogHeader>
          <DialogBody>
            <ViewNav>
              <ViewItem $active>
                <DecisionTableIcon />
                <ViewLabel>{"Decision\nTable"}</ViewLabel>
                <ViewPointer width="12" height="15" viewBox="0 0 12 15"><path d="M0 2l5 5.500L0 13z" fill="#ececec" /><path d="M5 1l6 6.500L5 14" fill="#fff" stroke="#d0d0d0" /></ViewPointer>
              </ViewItem>
              <ViewItem><ExpressionIcon /><ClippedLabel>Formaler Ausdruck</ClippedLabel></ViewItem>
              <ViewItem><LinkIcon /><ViewLabel>Link</ViewLabel></ViewItem>
              <ViewItem><FreeTextIcon /><ViewLabel>Freitext</ViewLabel></ViewItem>
            </ViewNav>
            <Panel>
              <RuleBar>
                <RuleButton><AddRuleIcon />Regel hinzufügen<RuleCaret><Caret color="#000" /></RuleCaret></RuleButton>
                <RuleButton $gap={5}><RemoveRuleIcon />Regel entfernen</RuleButton>
                <RuleSeparator />
                <RuleButton><AddInputIcon />Eingabe hinzufügen<RuleCaret><Caret color="#000" /></RuleCaret></RuleButton>
                <RuleButton><RemoveColumnIcon />Spalte entfernen</RuleButton>
                <RuleSpacer />
                <RuleButton><GearIcon />Überprüfen</RuleButton>
                <RuleButton $gap={0}><ExportIcon />Import/Export<RuleCaret><Caret color="#000" /></RuleCaret></RuleButton>
              </RuleBar>
              <DecisionTable />
            </Panel>
          </DialogBody>
          <DialogFooter>
            <CancelLink href="#cancel">Abbrechen</CancelLink>
            <ApplyButton>Übernehmen</ApplyButton>
          </DialogFooter>
        </Dialog>
      </Overlay>
    </>
  );
}
